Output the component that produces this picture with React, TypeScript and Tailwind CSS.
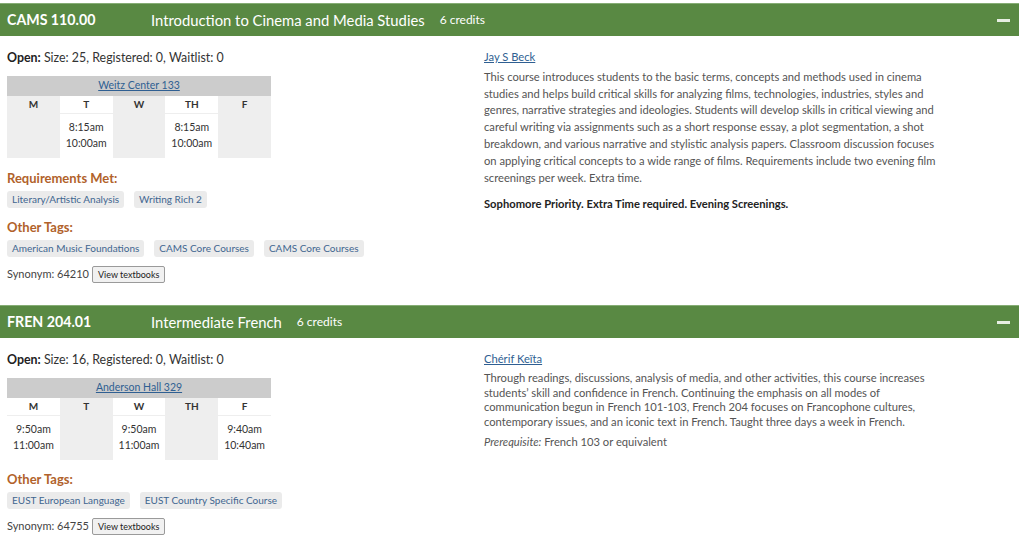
type Day = { d: string; times?: [string, string] };

type Course = {
  code: string;
  title: string;
  credits: string;
  open: string;
  room: string;
  days: Day[];
  reqs?: string[];
  tags: string[];
  synonym: string;
  prof: string;
  desc: string;
  descLead: string;
  extra: React.ReactNode;
};

const courses: Course[] = [
  {
    code: "CAMS 110.00",
    title: "Introduction to Cinema and Media Studies",
    credits: "6 credits",
    open: "Size: 25, Registered: 0, Waitlist: 0",
    room: "Weitz Center 133",
    days: [
      { d: "M" },
      { d: "T", times: ["8:15am", "10:00am"] },
      { d: "W" },
      { d: "TH", times: ["8:15am", "10:00am"] },
      { d: "F" },
    ],
    reqs: ["Literary/Artistic Analysis", "Writing Rich 2"],
    tags: ["American Music Foundations", "CAMS Core Courses", "CAMS Core Courses"],
    synonym: "64210",
    prof: "Jay S Beck",
    desc: "This course introduces students to the basic terms, concepts and methods used in cinema studies and helps build critical skills for analyzing films, technologies, industries, styles and genres, narrative strategies and ideologies. Students will develop skills in critical viewing and careful writing via assignments such as a short response essay, a plot segmentation, a shot breakdown, and various narrative and stylistic analysis papers. Classroom discussion focuses on applying critical concepts to a wide range of films. Requirements include two evening film screenings per week. Extra time.",
    descLead: "leading-[16.8px]",
    extra: (
      <p className="mt-[10px] font-bold text-[#222]">
        Sophomore Priority. Extra Time required. Evening Screenings.
      </p>
    ),
  },
  {
    code: "FREN 204.01",
    title: "Intermediate French",
    credits: "6 credits",
    open: "Size: 16, Registered: 0, Waitlist: 0",
    room: "Anderson Hall 329",
    days: [
      { d: "M", times: ["9:50am", "11:00am"] },
      { d: "T" },
      { d: "W", times: ["9:50am", "11:00am"] },
      { d: "TH" },
      { d: "F", times: ["9:40am", "10:40am"] },
    ],
    tags: ["EUST European Language", "EUST Country Specific Course"],
    synonym: "64755",
    prof: "Chérif Keïta",
    desc: "Through readings, discussions, analysis of media, and other activities, this course increases students’ skill and confidence in French. Continuing the emphasis on all modes of communication begun in French 101-103, French 204 focuses on Francophone cultures, contemporary issues, and an iconic text in French. Taught three days a week in French.",
    descLead: "leading-[14.7px]",
    extra: (
      <p className="mt-[5px] leading-[14.7px]">
        <em>Prerequisite:</em> French 103 or equivalent
      </p>
    ),
  },
];

function Tag({ label }: { label: string }) {
  return (
    <span className="h-[17px] px-[5px] flex items-center rounded-[3px] bg-[#ebebeb] text-[10px] text-[#3f6690]">
      {label}
    </span>
  );
}

function Schedule({ room, days }: { room: string; days: Day[] }) {
  return (
    <div className="w-[264px] text-[#333]">
      <div className="h-[20px] bg-[#cccccc] flex items-center justify-center">
        <a className="text-[10.5px] text-[#2f5f92] underline">{room}</a>
      </div>
      <div className="grid grid-cols-5">
        {days.map((day) => (
          <div key={day.d} className={day.times ? "bg-white" : "bg-[#eeeeee]"}>
            <div className="h-[18px] flex items-center justify-center text-[10px] font-bold border-b border-[#eeeeee]">
              {day.d}
            </div>
            <div className="h-[44px] pt-[5px] text-center text-[10.5px] leading-[16px]">
              {day.times && (
                <>
                  <div>{day.times[0]}</div>
                  <div>{day.times[1]}</div>
                </>
              )}
            </div>
          </div>
        ))}
      </div>
    </div>
  );
}

function CourseBlock({ c }: { c: Course }) {
  return (
    <div>
      {/* Header bar */}
      <div className="h-[33px] bg-[#598943] border-t border-[#86ad75] flex items-center pl-[7px] pr-[9px] text-white">
        <span className="w-[144px] text-[14.2px] font-bold">{c.code}</span>
        <span className="text-[14.8px]">{c.title}</span>
        <span className="ml-[15px] text-[12px]">{c.credits}</span>
        <span className="ml-auto w-[13px] h-[3px] bg-[#e6eee2]" />
      </div>

      <div className="flex">
        {/* Left column */}
        <div className="w-[484px] px-[7px] pt-[13px]">
          <p className="text-[12.4px] leading-[17px] text-[#333]">
            <span className="font-bold text-[#222]">Open:</span> {c.open}
          </p>
          <div className="mt-[10px]">
            <Schedule room={c.room} days={c.days} />
          </div>
          {c.reqs && (
            <>
              <h3 className="mt-[11px] text-[13px] leading-[18px] font-bold text-[#b1622b]">Requirements Met:</h3>
              <div className="mt-[4px] flex gap-[10px]">
                {c.reqs.map((r) => (
                  <Tag key={r} label={r} />
                ))}
              </div>
            </>
          )}
          <h3 className="mt-[10px] text-[13px] leading-[18px] font-bold text-[#b1622b]">Other Tags:</h3>
          <div className="mt-[4px] flex gap-[10px]">
            {c.tags.map((t, i) => (
              <Tag key={i} label={t} />
            ))}
          </div>
          <div className="mt-[9px] flex items-center gap-[3px] text-[11px] text-[#444]">
            <span>Synonym: {c.synonym}</span>
            <button className="h-[17px] px-[5px] text-[9px] text-[#222] bg-[#f1f1f1] border border-[#9a9a9a] rounded-[2px]">
              View textbooks
            </button>
          </div>
        </div>

        {/* Right column */}
        <div className="w-[462px] pt-[12px] text-[11.2px] text-[#555]">
          <a className="underline text-[#2f5f92] leading-[17px]">{c.prof}</a>
          <p className={`mt-[3px] ${c.descLead}`}>{c.desc}</p>
          {c.extra}
        </div>
      </div>
    </div>
  );
}

export default function App() {
  return (
    <div className="w-[1019px] pt-[3px] bg-white font-['Lato',sans-serif]">
      <CourseBlock c={courses[0]} />
      <div className="h-[22px]" />
      <CourseBlock c={courses[1]} />
    </div>
  );
}
